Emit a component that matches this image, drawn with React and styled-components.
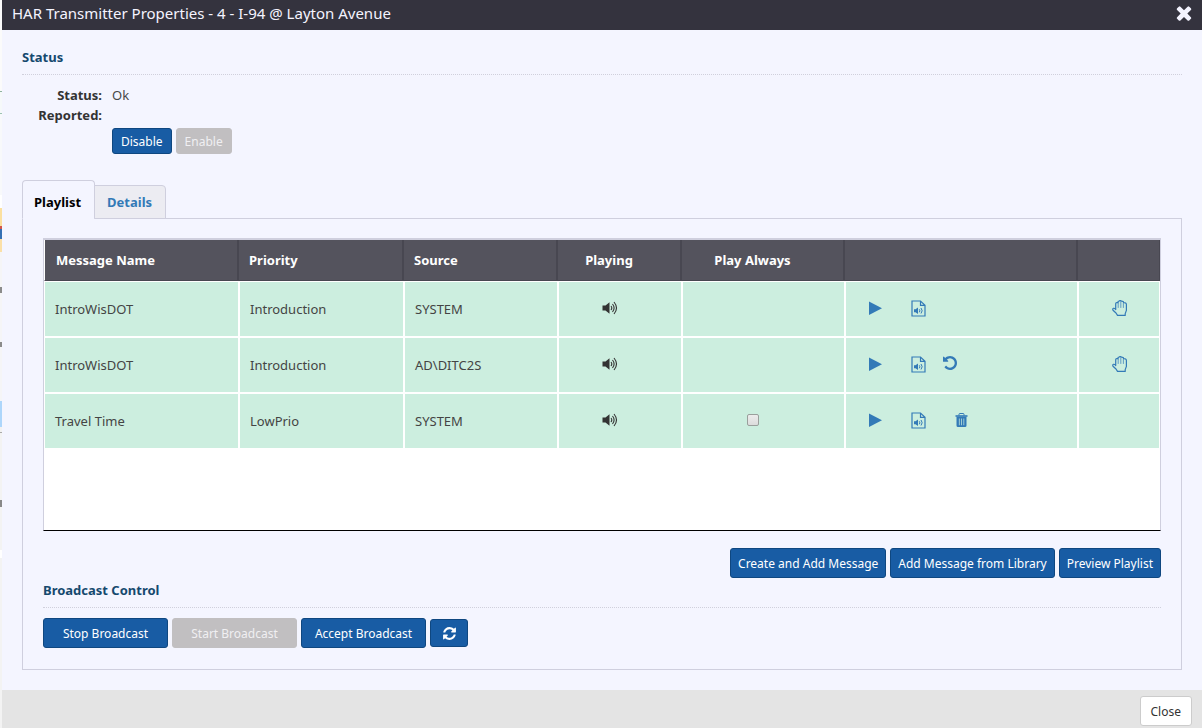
import React from "react";
import styled, { createGlobalStyle, css } from "styled-components";

const colors = {
  page: "#f4f5ff",
  titleBar: "#34333e",
  heading: "#15496e",
  line: "#cfcfde",
  primary: "#185ca4",
  primaryEdge: "#0f4780",
  disabled: "#c1bfc1",
  link: "#337ab7",
  playing: "#cceedf",
  th: "#54535d",
  thEdge: "#484751",
  footer: "#e4e4e4",
};

const GlobalStyle = createGlobalStyle`
  *, *::before, *::after { box-sizing: border-box; }
  html, body, #root { height: 100%; }
  body {
    margin: 0;
    background: ${colors.page};
    color: #333;
    font: 13px/20px "Noto Sans", "Open Sans", sans-serif;
  }
  button, input { font: inherit; }
`;

const Backdrop = styled.div`
  min-height: 100%;
  padding-left: 2px;
  display: flex;
  background: linear-gradient(
    #fbfbfb 0 91px, #8fb3a0 91px 92px, #f6f9fa 92px 113px, #9cc3b3 113px 114px,
    #f8f9fb 114px 195px, #fff 195px 208px, #fbe0a0 208px 226px, #d2574c 226px 229px,
    #3470b4 229px 239px, #fbe0a8 239px 252px, #f5f5f7 252px 287px, #8b8b8b 287px 293px,
    #f5f5f7 293px 342px, #8b8b8b 342px 347px, #f5f5f7 347px 401px, #add6fb 401px 427px,
    #f2f2f2 427px 432px, #aaa 432px 433px, #f3f3f3 433px 500px, #888 500px 507px,
    #f3f3f3 507px 550px, #fff 550px 558px, #f3f3f3 558px
  );
`;

const Dialog = styled.div`
  flex: 1;
  min-width: 0;
  display: flex;
  flex-direction: column;
  background: ${colors.page};
`;

const TitleBar = styled.header`
  height: 30px;
  padding: 0 10px 4px;
  display: flex;
  align-items: center;
  justify-content: space-between;
  background: ${colors.titleBar};
`;

const Title = styled.h1`
  margin: 0;
  font-size: 15px;
  font-weight: 400;
  color: #f4f4ff;
`;

const TitleClose = styled.button`
  padding: 0;
  border: 0;
  display: flex;
  background: none;
  color: #f4f4ff;
  cursor: pointer;
`;

const Body = styled.main`
  flex: 1;
  padding: 17px 20px 20px;
`;

const SectionTitle = styled.h2`
  margin: 0;
  padding-bottom: 7px;
  border-bottom: 1px dotted #d0d0dc;
  font-size: 13px;
  line-height: 20px;
  font-weight: 700;
  color: ${colors.heading};
`;

const StatusList = styled.dl`
  margin: 10px 0 0;
  display: grid;
  grid-template-columns: 80px 1fr;
  column-gap: 10px;
  dt { font-weight: 700; text-align: right; }
  dd { margin: 0; color: #484848; }
`;

const ButtonRow = styled.div`
  display: flex;
  align-items: center;
  gap: 4px;
  justify-content: ${(p) => (p.$end ? "flex-end" : "flex-start")};
`;

const StatusButtons = styled(ButtonRow)`
  margin: 3px 0 0 90px;
`;

const Button = styled.button`
  height: ${(p) => (p.$small ? 26 : 30)}px;
  min-width: ${(p) => (p.$wide ? 125 : 0)}px;
  padding: 2px ${(p) => (p.$small ? 8 : 7)}px 0;
  border: 1px solid ${colors.primaryEdge};
  border-radius: 3px;
  background: ${colors.primary};
  color: #fff;
  font-size: 12px;
  white-space: nowrap;
  cursor: pointer;
  &:disabled {
    border-color: ${colors.disabled};
    background: ${colors.disabled};
    color: #f0eff2;
    cursor: default;
  }
`;

const RefreshButton = styled(Button)`
  width: 38px;
  height: 28px;
  padding: 0;
  display: grid;
  place-items: center;
`;

const Tabs = styled.div`
  margin-top: 26px;
  display: flex;
  align-items: flex-end;
`;

const Tab = styled.button`
  height: 34px;
  padding: 0 13px 0 12px;
  margin-left: -1px;
  border: 1px solid ${colors.line};
  border-radius: 0 4px 0 0;
  background: #ececf2;
  color: ${colors.link};
  font-weight: 700;
  cursor: pointer;
  ${(p) =>
    p.$active &&
    css`
      height: 39px;
      padding: 5px 13px 0 11px;
      margin-left: 0;
      border-bottom-color: ${colors.page};
      border-radius: 4px 4px 0 0;
      background: ${colors.page};
      color: #000;
    `}
`;

const Panel = styled.section`
  margin-top: -1px;
  padding: 19px 20px 21px;
  border: 1px solid ${colors.line};
`;

const TableFrame = styled.div`
  min-height: 293px;
  border: 1px solid ${colors.line};
  border-top-width: 2px;
  border-bottom-color: #000;
  background: #fff;
`;

const Table = styled.table`
  width: 100%;
  table-layout: fixed;
  border-collapse: separate;
  border-spacing: 0;
`;

const Th = styled.th`
  height: 41px;
  padding: ${(p) => (p.$center ? "0 20px 0 0" : "0 10px")};
  border-right: 2px solid ${colors.thEdge};
  border-bottom: 1px solid ${colors.thEdge};
  background: ${colors.th};
  color: #fff;
  text-align: ${(p) => (p.$center ? "center" : "left")};
  tr > &:first-child { padding-left: 11px; border-left: 1px solid #fff; }
  tr > &:last-child { border-right-width: 1px; }
`;

const Td = styled.td`
  height: 56px;
  padding: ${(p) => (p.$center ? "0 21px 2px 0" : "0 10px")};
  border: 1px solid #fff;
  background: ${colors.playing};
  color: #444;
  text-align: ${(p) => (p.$center ? "center" : "left")};
  > svg, > input { display: block; margin: 0 auto; color: #333; }
`;

const Actions = styled.div`
  padding: 0 0 2px 12px;
  display: flex;
  align-items: center;
`;

const IconButton = styled.button`
  width: ${(p) => p.$slot || 32}px;
  padding: 0;
  border: 0;
  display: flex;
  justify-content: ${(p) => (p.$end ? "flex-end" : "flex-start")};
  background: none;
  color: ${colors.link};
  cursor: pointer;
`;

const HoldButton = styled(IconButton)`
  width: 100%;
  padding: 0 0 2px 2px;
  justify-content: center;
`;

const Checkbox = styled.input`
  appearance: none;
  width: 12px;
  height: 12px;
  border: 1px solid #9a9f9c;
  border-radius: 2px;
  background: linear-gradient(#ececec, #dcdcdc);
`;

const BroadcastTitle = styled(SectionTitle)`
  margin: 2px 0 10px;
`;

const Toolbar = styled(ButtonRow)`
  margin-top: 17px;
`;

const Footer = styled.footer`
  height: 38px;
  padding: 0 10px 0 0;
  display: flex;
  align-items: center;
  justify-content: flex-end;
  background: ${colors.footer};
`;

const CloseButton = styled(Button)`
  margin-top: 4px;
  padding: 2px 10px 0;
  border-color: #ccc;
  background: #fff;
  color: #333;
`;

const Icon = ({ w = 16, h = 16, box, children }) => (
  <svg width={w} height={h} viewBox={box || `0 0 ${w} ${h}`} fill="currentColor" aria-hidden="true">
    {children}
  </svg>
);

const TimesIcon = () => (
  <Icon w={16} h={16} box="296 256 1200 1312">
    <path d="M1490 1322q0 40-28 68l-136 136q-28 28-68 28t-68-28l-294-294-294 294q-28 28-68 28t-68-28l-136-136q-28-28-28-68t28-68l294-294-294-294q-28-28-28-68t28-68l136-136q28-28 68-28t68 28l294 294 294-294q28-28 68-28t68 28l136 136q28 28 28 68t-28 68l-294 294 294 294q28 28 28 68z" />
  </Icon>
);

const RefreshIcon = () => (
  <Icon w={15} h={15} box="0 0 1792 1792">
    <path d="M1639 1056q0 5-1 7-64 268-268 434.500t-478 166.500q-146 0-282.500-55t-243.500-157l-129 129q-19 19-45 19t-45-19-19-45v-448q0-26 19-45t45-19h448q26 0 45 19t19 45-19 45l-137 137q71 66 161 102t187 36q134 0 250-65t186-179q11-17 53-117 8-23 30-23h192q13 0 22.500 9.500t9.500 22.500zm25-800v448q0 26-19 45t-45 19h-448q-26 0-45-19t-19-45 19-45l138-138q-148-137-349-137-134 0-250 65t-186 179q-11 17-53 117-8 23-30 23h-199q-13 0-22.500-9.500t-9.500-22.500v-7q65-268 270-434.500t480-166.500q146 0 284 55.500t245 156.500l130-129q19-19 45-19t45 19 19 45z" />
  </Icon>
);

const UndoIcon = () => (
  <Icon w={14} h={17} box="128 128 1536 1865">
    <path d="M1664 896q0 156-61 298t-164 245-245 164-298 61q-172 0-327-72.500t-264-204.500q-7-10-6.500-22.500t8.500-20.500l137-138q10-9 25-9 16 2 23 12 73 95 179 147t225 52q104 0 198.500-40.500t163.500-109.500 109.500-163.500 40.500-198.500-40.500-198.500-109.500-163.500-163.500-109.500-198.500-40.500q-98 0-188 35.500t-160 101.500l137 138q31 30 14 69-17 40-59 40h-448q-26 0-45-19t-19-45v-448q0-42 40-59 39-17 69 14l130 129q107-101 244.500-156.500t284.500-55.500q156 0 298 61t245 164 164 245 61 298z" />
  </Icon>
);

const PlayIcon = () => (
  <Icon w={14} h={14}>
    <path d="M1 0.500v13.500L14 7.200z" />
  </Icon>
);

const FileAudioIcon = () => (
  <Icon w={15} h={17}>
    <path d="M1 1h8.500L14 5.300V16H1zM9.500 1v4.300H14" fill="none" stroke="currentColor" strokeWidth="1.200" />
    <path d="M3 9.300h1.500L7 7.500v6.500l-2.500-1.800H3z" />
    <path d="M8.300 9.300q1.200 1.500 0 3M10 8q2.300 2.700 0 5.500" fill="none" stroke="currentColor" />
  </Icon>
);

const HandIcon = () => (
  <Icon w={16} h={16}>
    <g fill="none" stroke="currentColor" strokeLinejoin="round" strokeLinecap="round">
      <path
        d="M3.700 9.500V3.800q0-1.200 1-1.300l1.300.1V1.900q.1-.9 1.100-.9L8 .6q1-.1 1.500.6l1.200.1q.9.200.9 1.200l1.600.4q1.200.3 1.200 1.500v6l-1.200 3.200v1.800H5.500L4 13 1 10.200Q.3 8.800 1.500 8.300q1-.3 2.200 1.200"
        strokeWidth="1.200"
      />
      <path d="M6.200 3v4.500M8.800 2v5.500M11.400 3v4.500" strokeWidth=".7" />
    </g>
  </Icon>
);

const TrashIcon = () => (
  <Icon w={13} h={14}>
    <path d="M4 2.500V1.300Q4 .5 5 .5h3q1 0 1 .8v1.200" fill="none" stroke="currentColor" />
    <path d="M.5 2.200h12v1.600H.5z" />
    <path fillRule="evenodd" d="M1.500 3.700h10V12.500q0 1.500-1.500 1.500H3q-1.500 0-1.500-1.500zM3.900 5.400v6.800h.7V5.400zM6.200 5.400v6.800h.7V5.400zM8.500 5.400v6.800h.7V5.400z" />
  </Icon>
);

const VolumeIcon = () => (
  <Icon w={16} h={14}>
    <path d="M.5 4.500h3L7.500 1.200v11.600L3.500 9.500h-3z" />
    <path d="M9 5q1.600 2 0 4M10.500 3q3.200 4 0 8M12 1q5 6 0 12" fill="none" stroke="currentColor" strokeWidth="1.100" />
  </Icon>
);

const columnWidths = [195, 165, 154, 124, 163, 233, 82];

const messages = [
  { name: "IntroWisDOT", priority: "Introduction", source: "SYSTEM", hold: true },
  { name: "IntroWisDOT", priority: "Introduction", source: "AD\\DITC2S", undo: true, hold: true },
  { name: "Travel Time", priority: "LowPrio", source: "SYSTEM", optional: true },
];

const MessageRow = ({ message }) => (
  <tr>
    <Td>{message.name}</Td>
    <Td>{message.priority}</Td>
    <Td>{message.source}</Td>
    <Td $center><VolumeIcon /></Td>
    <Td $center>{message.optional && <Checkbox type="checkbox" aria-label="Play Always" />}</Td>
    <Td>
      <Actions>
        <IconButton $slot={43} aria-label="Play"><PlayIcon /></IconButton>
        <IconButton aria-label="Audio file"><FileAudioIcon /></IconButton>
        {message.undo && <IconButton aria-label="Undo"><UndoIcon /></IconButton>}
        {message.optional && <IconButton $slot={25} $end aria-label="Delete"><TrashIcon /></IconButton>}
      </Actions>
    </Td>
    <Td>{message.hold && <HoldButton aria-label="Hold"><HandIcon /></HoldButton>}</Td>
  </tr>
);

export default function App() {
  return (
    <Backdrop>
      <GlobalStyle />
      <Dialog role="dialog" aria-labelledby="dialog-title">
        <TitleBar>
          <Title id="dialog-title">HAR Transmitter Properties - 4 - I-94 @ Layton Avenue</Title>
          <TitleClose aria-label="Close dialog"><TimesIcon /></TitleClose>
        </TitleBar>
        <Body>
          <SectionTitle>Status</SectionTitle>
          <StatusList>
            <dt>Status:</dt>
            <dd>Ok</dd>
            <dt>Reported:</dt>
            <dd />
          </StatusList>
          <StatusButtons>
            <Button $small>Disable</Button>
            <Button $small disabled>Enable</Button>
          </StatusButtons>
          <Tabs role="tablist">
            <Tab $active role="tab" aria-selected="true">Playlist</Tab>
            <Tab role="tab" aria-selected="false">Details</Tab>
          </Tabs>
          <Panel role="tabpanel">
            <TableFrame>
              <Table>
                <colgroup>
                  {columnWidths.map((width, i) => <col key={i} width={width} />)}
                </colgroup>
                <thead>
                  <tr>
                    <Th>Message Name</Th>
                    <Th>Priority</Th>
                    <Th>Source</Th>
                    <Th $center>Playing</Th>
                    <Th $center>Play Always</Th>
                    <Th />
                    <Th />
                  </tr>
                </thead>
                <tbody>
                  {messages.map((message, i) => <MessageRow key={i} message={message} />)}
                </tbody>
              </Table>
            </TableFrame>
            <Toolbar $end>
              <Button>Create and Add Message</Button>
              <Button>Add Message from Library</Button>
              <Button>Preview Playlist</Button>
            </Toolbar>
            <BroadcastTitle>Broadcast Control</BroadcastTitle>
            <ButtonRow>
              <Button $wide>Stop Broadcast</Button>
              <Button $wide disabled>Start Broadcast</Button>
              <Button $wide>Accept Broadcast</Button>
              <RefreshButton aria-label="Refresh"><RefreshIcon /></RefreshButton>
            </ButtonRow>
          </Panel>
        </Body>
        <Footer>
          <CloseButton>Close</CloseButton>
        </Footer>
      </Dialog>
    </Backdrop>
  );
}
